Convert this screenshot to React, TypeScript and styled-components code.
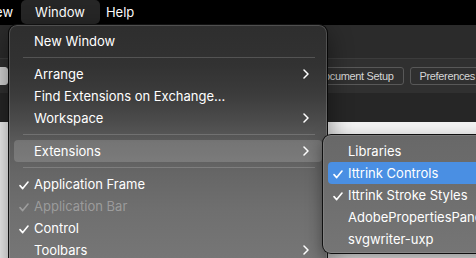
import React from 'react';
import styled, { createGlobalStyle } from 'styled-components';

const GlobalStyle = createGlobalStyle`
  html, body {
    margin: 0;
    padding: 0;
    background: #000;
    overflow: hidden;
  }
  body {
    font-family: Inter, "Liberation Sans", sans-serif;
    -webkit-font-smoothing: antialiased;
  }
`;

const Screen = styled.div`
  position: relative;
  width: 476px;
  height: 258px;
  overflow: hidden;
  display: flex;
  flex-direction: column;
  background: #000;
`;

const MenuBar = styled.nav`
  height: 25px;
  flex: none;
  display: flex;
  align-items: stretch;
  background: #000;
  color: #fff;
  font-size: 13px;
`;

const BarItem = styled.div<{ $active?: boolean }>`
  display: flex;
  align-items: center;
  height: 24px;
  padding: ${(p) => (p.$active ? '0 15px 0 14px' : '0 8px 0 6px')};
  border-radius: 5px;
  background: ${(p) => (p.$active ? 'rgba(255,255,255,0.15)' : 'transparent')};
  &:first-child {
    margin-left: -23px;
  }
`;

const AppWindow = styled.div`
  flex: 1;
  display: flex;
  flex-direction: column;
`;

const TitleBar = styled.div`
  height: 33px;
  background: #2b2b2b;
  border-bottom: 1px solid #3c3c3c;
`;

const Toolbar = styled.div`
  height: 34px;
  margin-right: -9px;
  display: flex;
  align-items: center;
  gap: 6px;
  background: #303030;
`;

const ToolButton = styled.div<{ $light?: boolean }>`
  height: 18px;
  box-sizing: border-box;
  display: flex;
  align-items: center;
  padding: 0 9px;
  border: 1px solid ${(p) => (p.$light ? '#d4d4d4' : '#585858')};
  border-radius: 3px;
  background: ${(p) => (p.$light ? '#d4d4d4' : 'transparent')};
  color: ${(p) => (p.$light ? '#222' : '#d6d6d6')};
  font-family: "Liberation Sans", Arial, sans-serif;
  font-size: 11px;
  letter-spacing: -0.35px;
  white-space: nowrap;
  &:first-child {
    margin-left: -40px;
    margin-right: auto;
    width: 48px;
  }
`;

const PanelStrip = styled.div`
  height: 29px;
  background: #262626;
`;

const Canvas = styled.div`
  flex: 1;
  background: #f2f2f2;
`;

const Dropdown = styled.div`
  position: absolute;
  left: 8px;
  top: 24px;
  width: 320px;
  height: 260px;
  box-sizing: border-box;
  padding-top: 5px;
  border: 1px solid rgba(0, 0, 0, 0.85);
  border-radius: 9px;
  box-shadow: inset 0 0 0 1px rgba(255, 255, 255, 0.16), 0 8px 24px rgba(0, 0, 0, 0.45);
  background: linear-gradient(
    to bottom,
    #2e2e2e 0px,
    #323232 40px,
    #3c3c3c 70px,
    #4b4b4b 95px,
    #5b5b5b 118px,
    #666 148px,
    #6f6f6f 185px,
    #767676 234px
  );
`;

const Submenu = styled.div`
  position: absolute;
  left: 322px;
  top: 134px;
  width: 200px;
  box-sizing: border-box;
  padding: 5px 0 3px;
  border: 1px solid rgba(0, 0, 0, 0.85);
  border-radius: 9px;
  box-shadow: inset 0 0 0 1px rgba(255, 255, 255, 0.12), 0 6px 16px rgba(0, 0, 0, 0.4);
  background: linear-gradient(to bottom, #686868, #757575);
`;

const Row = styled.div<{ $hover?: boolean; $blue?: boolean; $disabled?: boolean }>`
  height: 22px;
  margin: 0 5px;
  display: flex;
  align-items: center;
  padding-right: 13px;
  border-radius: 4px;
  font-size: 13px;
  white-space: nowrap;
  color: ${(p) => (p.$disabled ? 'rgba(255,255,255,0.32)' : '#fff')};
  background: ${(p) =>
    p.$blue ? '#4a8fe3' : p.$hover ? 'rgba(255,255,255,0.16)' : 'transparent'};
`;

const CheckSlot = styled.span`
  width: 20px;
  flex: none;
  display: flex;
  align-items: center;
  padding-left: 5px;
  padding-top: 2px;
  box-sizing: border-box;
`;

const Label = styled.span`
  flex: 1;
`;

const Separator = styled.div`
  height: 11px;
  display: flex;
  align-items: center;
  margin: 0 12px 0 14px;
  &::after {
    content: '';
    flex: 1;
    height: 1px;
    background: rgba(255, 255, 255, 0.17);
  }
`;

const Check = () => (
  <svg width="10" height="9" viewBox="0 0 10 9" fill="none">
    <path d="M1 4.6 L3.7 7.6 L9 1" stroke="currentColor" strokeWidth="1.6" strokeLinecap="round" strokeLinejoin="round" />
  </svg>
);

const Chevron = () => (
  <svg width="6" height="10" viewBox="0 0 6 10" fill="none">
    <path d="M1 1 L5 5 L1 9" stroke="#fff" strokeWidth="1.5" strokeLinecap="round" strokeLinejoin="round" />
  </svg>
);

type Item = {
  label?: string;
  checked?: boolean;
  sub?: boolean;
  hover?: boolean;
  disabled?: boolean;
  sep?: boolean;
};

const windowItems: Item[] = [
  { label: 'New Window' },
  { sep: true },
  { label: 'Arrange', sub: true },
  { label: 'Find Extensions on Exchange...' },
  { label: 'Workspace', sub: true },
  { sep: true },
  { label: 'Extensions', sub: true, hover: true },
  { sep: true },
  { label: 'Application Frame', checked: true },
  { label: 'Application Bar', checked: true, disabled: true },
  { label: 'Control', checked: true },
  { label: 'Toolbars', sub: true },
];

const extensions = [
  { label: 'Libraries' },
  { label: 'Ittrink Controls', checked: true, active: true },
  { label: 'Ittrink Stroke Styles', checked: true },
  { label: 'AdobePropertiesPanel' },
  { label: 'svgwriter-uxp' },
];

const App: React.FC = () => {
  return (
    <>
      <GlobalStyle />
      <Screen>
        <MenuBar>
          <BarItem>View</BarItem>
          <BarItem $active>Window</BarItem>
          <BarItem>Help</BarItem>
        </MenuBar>

        <AppWindow>
          <TitleBar />
          <Toolbar>
            <ToolButton $light />
            <ToolButton>Document Setup</ToolButton>
            <ToolButton>Preferences</ToolButton>
          </Toolbar>
          <PanelStrip />
          <Canvas />
        </AppWindow>

        <Dropdown>
          {windowItems.map((it, i) =>
            it.sep ? (
              <Separator key={i} />
            ) : (
              <Row key={i} $hover={it.hover} $disabled={it.disabled}>
                <CheckSlot>{it.checked && <Check />}</CheckSlot>
                <Label>{it.label}</Label>
                {it.sub && <Chevron />}
              </Row>
            )
          )}
        </Dropdown>

        <Submenu>
          {extensions.map((it) => (
            <Row key={it.label} $blue={it.active}>
              <CheckSlot>{it.checked && <Check />}</CheckSlot>
              <Label>{it.label}</Label>
            </Row>
          ))}
        </Submenu>
      </Screen>
    </>
  );
};

export default App;
